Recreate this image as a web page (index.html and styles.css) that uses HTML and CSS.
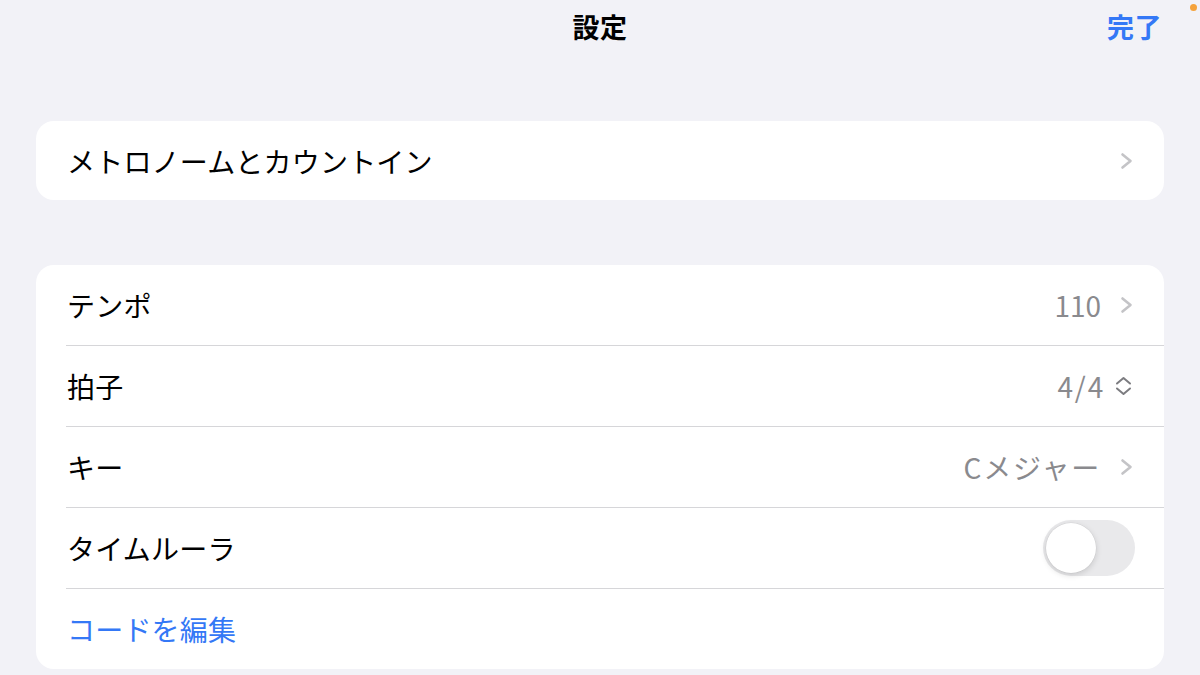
FILE: index.html
```html
<!DOCTYPE html>
<html lang="ja">
<head>
<meta charset="utf-8">
<link rel="stylesheet" href="styles.css">
</head>
<body>
<div class="screen">
  <header class="nav">
    <div class="nav-side"></div>
    <div class="nav-title">設定</div>
    <div class="nav-side nav-right"><span class="done">完了</span></div>
    <span class="dot"></span>
  </header>

  <section class="card card-first">
    <div class="row">
      <span class="label">メトロノームとカウントイン</span>
      <span class="trail">
        <svg class="chev" width="13" height="18" viewBox="0 0 13 18"><path d="M2.5 2.5 L10.5 9 L2.5 15.5" fill="none" stroke="#c4c4c7" stroke-width="2.6" stroke-linecap="round" stroke-linejoin="round"/></svg>
      </span>
    </div>
  </section>

  <section class="card card-second">
    <div class="row sep">
      <span class="label">テンポ</span>
      <span class="trail">
        <span class="value">110</span>
        <svg class="chev" width="13" height="18" viewBox="0 0 13 18"><path d="M2.5 2.5 L10.5 9 L2.5 15.5" fill="none" stroke="#c4c4c7" stroke-width="2.6" stroke-linecap="round" stroke-linejoin="round"/></svg>
      </span>
    </div>
    <div class="row sep">
      <span class="label">拍子</span>
      <span class="trail">
        <span class="value wide">4/4</span>
        <svg class="updown" width="19" height="20" viewBox="0 0 19 20"><path d="M3 7.5 L9.5 2 L16 7.5 M3 12.5 L9.5 18 L16 12.5" fill="none" stroke="#7c7c80" stroke-width="2" stroke-linecap="round" stroke-linejoin="round"/></svg>
      </span>
    </div>
    <div class="row sep">
      <span class="label">キー</span>
      <span class="trail">
        <span class="value wide">Cメジャー</span>
        <svg class="chev" width="13" height="18" viewBox="0 0 13 18"><path d="M2.5 2.5 L10.5 9 L2.5 15.5" fill="none" stroke="#c4c4c7" stroke-width="2.6" stroke-linecap="round" stroke-linejoin="round"/></svg>
      </span>
    </div>
    <div class="row sep">
      <span class="label">タイムルーラ</span>
      <span class="trail">
        <span class="switch"><span class="knob"></span></span>
      </span>
    </div>
    <div class="row">
      <span class="label link">コードを編集</span>
    </div>
  </section>
</div>
</body>
</html>
```

FILE: styles.css
```css
html, body {
  margin: 0;
  padding: 0;
}
body {
  background: #f2f2f7;
  font-family: "Noto Sans CJK JP", "Noto Sans", sans-serif;
  color: #000;
  width: 1200px;
  height: 675px;
  overflow: hidden;
}
.screen {
  display: flex;
  flex-direction: column;
  padding: 0 36px;
}
.nav {
  position: relative;
  height: 54px;
  display: grid;
  grid-template-columns: 1fr auto 1fr;
  align-items: center;
}
.nav-title {
  font-size: 27px;
  font-weight: 700;
  letter-spacing: 0.5px;
  margin-top: -1px;
}
.nav-right {
  display: flex;
  justify-content: flex-end;
  padding-right: 2px;
}
.done {
  color: #3478f6;
  font-size: 27px;
  font-weight: 700;
  letter-spacing: 0.5px;
  margin-top: -1px;
}
.dot {
  position: absolute;
  right: -33px;
  top: 4px;
  width: 7px;
  height: 7px;
  border-radius: 50%;
  background: #f5a33c;
}
.card {
  background: #fff;
  border-radius: 18px;
  overflow: hidden;
}
.card-first {
  margin-top: 67px;
}
.card-second {
  margin-top: 65px;
}
.row {
  height: 80px;
  display: flex;
  align-items: center;
  justify-content: space-between;
  padding: 0 31px;
  position: relative;
}
.card-first .row {
  height: 79px;
}
.row.sep::after {
  content: "";
  position: absolute;
  left: 30px;
  right: 0;
  bottom: -1px;
  height: 1px;
  background: #d6d6d9;
}
.row.sep {
  margin-bottom: 1px;
}
.label {
  font-size: 28px;
  line-height: 1;
  letter-spacing: 0.2px;
}
.link {
  color: #3478f6;
}
.trail {
  display: flex;
  align-items: center;
  gap: 19px;
}
.value {
  font-size: 28px;
  line-height: 1;
  color: #8a8a8e;
}
.value.wide {
  letter-spacing: 1.8px;
}
.chev {
  display: block;
}
.updown {
  display: block;
  margin-left: -10px;
}
.switch {
  width: 92px;
  height: 56px;
  border-radius: 28px;
  background: #e9e9eb;
  position: relative;
  margin-right: -2px;
}
.knob {
  position: absolute;
  left: 3px;
  top: 3px;
  width: 50px;
  height: 50px;
  border-radius: 50%;
  background: #fff;
  box-shadow: 0 2px 6px rgba(0,0,0,0.15), 0 0 0 0.5px rgba(0,0,0,0.06);
}
```
